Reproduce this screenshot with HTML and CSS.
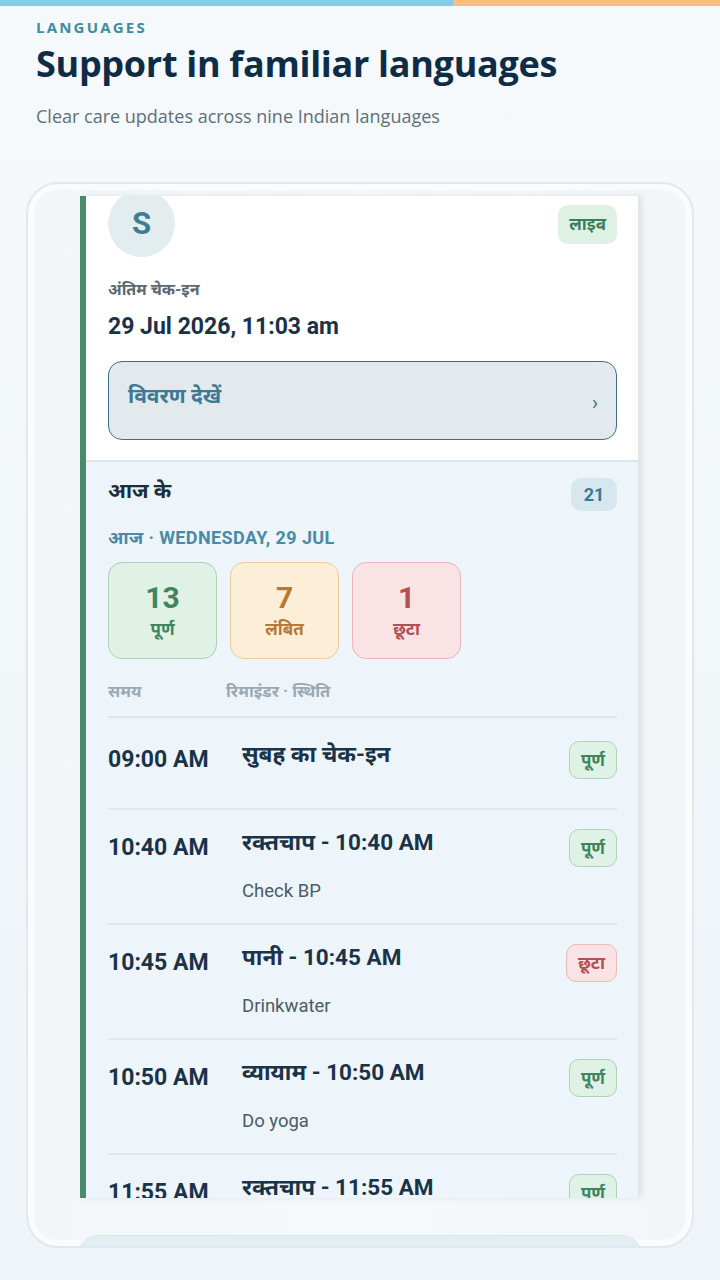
FILE: index.html
```html
<!DOCTYPE html>
<html lang="hi">
<head>
    <meta charset="UTF-8">
    <meta name="viewport" content="width=device-width, initial-scale=1.0">
    <title>Languages</title>
    <link rel="stylesheet" href="styles.css">
</head>
<body>

    <div class="topbar">
        <span class="bar-blue"></span>
        <span class="bar-orange"></span>
    </div>

    <header class="intro">
        <p class="eyebrow">LANGUAGES</p>
        <h1>Support in familiar languages</h1>
        <p class="lead">Clear care updates across nine Indian languages</p>
    </header>

    <div class="device">
        <div class="screen">
            <div class="screen-inner">

                <section class="profile">
                    <div class="profile-top">
                        <div class="avatar">S</div>
                        <span class="live">लाइव</span>
                    </div>
                    <p class="label">अंतिम चेक-इन</p>
                    <p class="checkin">29 Jul 2026, 11:03 am</p>
                    <div class="details-btn">
                        <span>विवरण देखें</span>
                        <span class="chev">›</span>
                    </div>
                </section>

                <section class="today">
                    <div class="today-head">
                        <h3>आज के</h3>
                        <span class="count">21</span>
                    </div>
                    <p class="date">आज · WEDNESDAY, 29 JUL</p>

                    <div class="stats">
                        <div class="stat done"><strong>13</strong><span>पूर्ण</span></div>
                        <div class="stat pending"><strong>7</strong><span>लंबित</span></div>
                        <div class="stat missed"><strong>1</strong><span>छूटा</span></div>
                    </div>

                    <div class="cols">
                        <span class="col-time">समय</span>
                        <span>रिमाइंडर · स्थिति</span>
                    </div>

                    <div class="list">
                        <div class="row">
                            <span class="time">09:00 AM</span>
                            <div class="info">
                                <p class="title">सुबह का चेक-इन</p>
                            </div>
                            <span class="tag ok">पूर्ण</span>
                        </div>
                        <div class="row">
                            <span class="time">10:40 AM</span>
                            <div class="info">
                                <p class="title">रक्तचाप - 10:40 AM</p>
                                <p class="sub">Check BP</p>
                            </div>
                            <span class="tag ok">पूर्ण</span>
                        </div>
                        <div class="row">
                            <span class="time">10:45 AM</span>
                            <div class="info">
                                <p class="title">पानी - 10:45 AM</p>
                                <p class="sub">Drinkwater</p>
                            </div>
                            <span class="tag miss">छूटा</span>
                        </div>
                        <div class="row">
                            <span class="time">10:50 AM</span>
                            <div class="info">
                                <p class="title">व्यायाम - 10:50 AM</p>
                                <p class="sub">Do yoga</p>
                            </div>
                            <span class="tag ok">पूर्ण</span>
                        </div>
                        <div class="row">
                            <span class="time">11:55 AM</span>
                            <div class="info">
                                <p class="title">रक्तचाप - 11:55 AM</p>
                                <p class="sub">Check BP</p>
                            </div>
                            <span class="tag ok">पूर्ण</span>
                        </div>
                    </div>
                </section>

            </div>
        </div>
        <div class="next-card"></div>
    </div>

</body>
</html>
```

FILE: styles.css
```css
body {
    margin: 0;
    font-family: "Open Sans", "Noto Sans", sans-serif;
    background: linear-gradient(180deg, #f5f9fb 0%, #eef4f8 100%);
    height: 1280px;
    overflow: hidden;
}
p, h1, h3 {
    margin: 0;
}
.topbar {
    display: flex;
    height: 6px;
}
.bar-blue {
    width: 453px;
    background: #88cbe8;
}
.bar-orange {
    flex: 1;
    background: #f6bf7c;
}
.intro {
    padding: 11px 36px 0;
}
.eyebrow {
    font-size: 15px;
    font-weight: 700;
    letter-spacing: 2.2px;
    color: #3f8ca2;
    line-height: 20px;
}
h1 {
    font-size: 36px;
    font-weight: 700;
    color: #0f2c47;
    line-height: 48px;
    margin-top: 3px;
    letter-spacing: -0.3px;
}
.lead {
    font-size: 18px;
    font-weight: 400;
    color: #5f6f7c;
    margin-top: 16px;
    line-height: 24px;
}

/* device frame */
.device {
    margin: 54px 26px 0;
    height: 1062px;
    border: 2px solid #dfe9ef;
    border-radius: 32px;
    background: linear-gradient(90deg, #f2f6f9 0%, #f6f9fc 50%, #f2f6f9 100%);
    box-shadow: inset 0 0 0 6px rgba(255, 255, 255, 0.5);
    overflow: hidden;
}
.screen {
    margin: 12px 0 0 52px;
    width: 558px;
    height: 1002px;
    overflow: hidden;
    box-shadow: 4px 0 6px rgba(60, 80, 100, 0.12);
    border-left: 6px solid #4b8a6b;
    box-sizing: border-box;
    font-family: Roboto, "Noto Sans Devanagari", "Noto Sans", sans-serif;
}
.screen-inner {
    margin-top: -6px;
}
.next-card {
    margin: 37px 0 0 49px;
    width: 566px;
    height: 40px;
    border-radius: 22px 22px 0 0;
    background: #e3eef4;
    border-top: 1px solid #d7e6ee;
}

/* profile */
.profile {
    background: #fff;
    padding: 0 21px 20px 22px;
    border-bottom: 2px solid #dde7ec;
}
.profile-top {
    display: flex;
    justify-content: space-between;
    align-items: flex-start;
}
.avatar {
    width: 67px;
    height: 67px;
    border-radius: 50%;
    background: #e3ecef;
    color: #3d7c95;
    font-size: 31px;
    font-weight: 700;
    display: flex;
    align-items: center;
    justify-content: center;
}
.live {
    margin-top: 15px;
    padding: 0 11px;
    height: 39px;
    line-height: 39px;
    border-radius: 10px;
    background: #dff1e5;
    color: #3e7d5b;
    font-size: 17px;
    font-weight: 700;
}
.label {
    margin-top: 22px;
    font-size: 16px;
    font-weight: 700;
    color: #5d6872;
    line-height: 22px;
}
.checkin {
    margin-top: 12px;
    font-size: 23px;
    font-weight: 700;
    color: #19324a;
    line-height: 28px;
}
.details-btn {
    margin-top: 20px;
    height: 77px;
    border: 1.5px solid #3f6f88;
    border-radius: 14px;
    background: #e3eaed;
    display: flex;
    align-items: center;
    justify-content: space-between;
    padding: 0 18px 0 19px;
    color: #3d7895;
    font-size: 21px;
    font-weight: 700;
}
.details-btn span:first-child {
    margin-top: -6px;
}
.chev {
    font-size: 20px;
    font-weight: 400;
    color: #3f6f88;
    margin-top: 4px;
}

/* today */
.today {
    background: #edf5fb;
    padding: 16px 21px 0 22px;
}
.today-head {
    display: flex;
    justify-content: space-between;
    align-items: center;
}
.today-head h3 {
    font-size: 21px;
    font-weight: 700;
    color: #1c2d3b;
    margin-top: -4px;
}
.count {
    width: 46px;
    height: 33px;
    line-height: 33px;
    text-align: center;
    border-radius: 10px;
    background: #d6e7ef;
    color: #3c7893;
    font-size: 18px;
    font-weight: 700;
}
.date {
    margin-top: 16px;
    font-size: 18px;
    font-weight: 700;
    color: #4a8aa8;
    line-height: 22px;
    letter-spacing: 0.4px;
}
.stats {
    display: flex;
    gap: 13px;
    margin-top: 13px;
}
.stat {
    width: 109px;
    height: 97px;
    box-sizing: border-box;
    border-radius: 14px;
    border: 1px solid;
    display: flex;
    flex-direction: column;
    align-items: center;
    justify-content: center;
    gap: 3px;
}
.stat strong {
    font-size: 30px;
    line-height: 34px;
}
.stat span {
    font-size: 17px;
    font-weight: 700;
    line-height: 22px;
}
.done {
    background: #e0f2e5;
    border-color: #abd1b7;
    color: #3f855f;
}
.pending {
    background: #fdeed8;
    border-color: #efcb98;
    color: #b47a36;
}
.missed {
    background: #fae3e4;
    border-color: #e9b7b8;
    color: #b25152;
}
.cols {
    display: flex;
    margin-top: 22px;
    font-size: 16.5px;
    font-weight: 700;
    color: #9ba9b3;
    line-height: 22px;
    padding-bottom: 13px;
    border-bottom: 2px solid #dbe6ec;
}
.col-time {
    width: 118px;
}
.list {
    margin-top: 4px;
}
.row {
    display: flex;
    align-items: flex-start;
    padding: 19px 0 21px;
    border-bottom: 2px solid #dde8ee;
    min-height: 46px;
}
.time {
    width: 134px;
    font-size: 23px;
    font-weight: 700;
    color: #1a3348;
    line-height: 30px;
    margin-top: 4px;
}
.info {
    flex: 1;
}
.title {
    font-size: 22.5px;
    font-weight: 700;
    color: #1a3348;
    line-height: 30px;
    margin-top: -2px;
}
.sub {
    margin-top: 23px;
    font-size: 18.5px;
    color: #4b5b67;
    line-height: 22px;
}
.tag {
    height: 38px;
    line-height: 36px;
    box-sizing: border-box;
    padding: 0 11px;
    border-radius: 10px;
    border: 1px solid;
    font-size: 17px;
    font-weight: 700;
}
.ok {
    background: #e0f2e5;
    border-color: #abd3b7;
    color: #3f855f;
}
.miss {
    background: #fae3e4;
    border-color: #eab9ba;
    color: #b25152;
}
```
